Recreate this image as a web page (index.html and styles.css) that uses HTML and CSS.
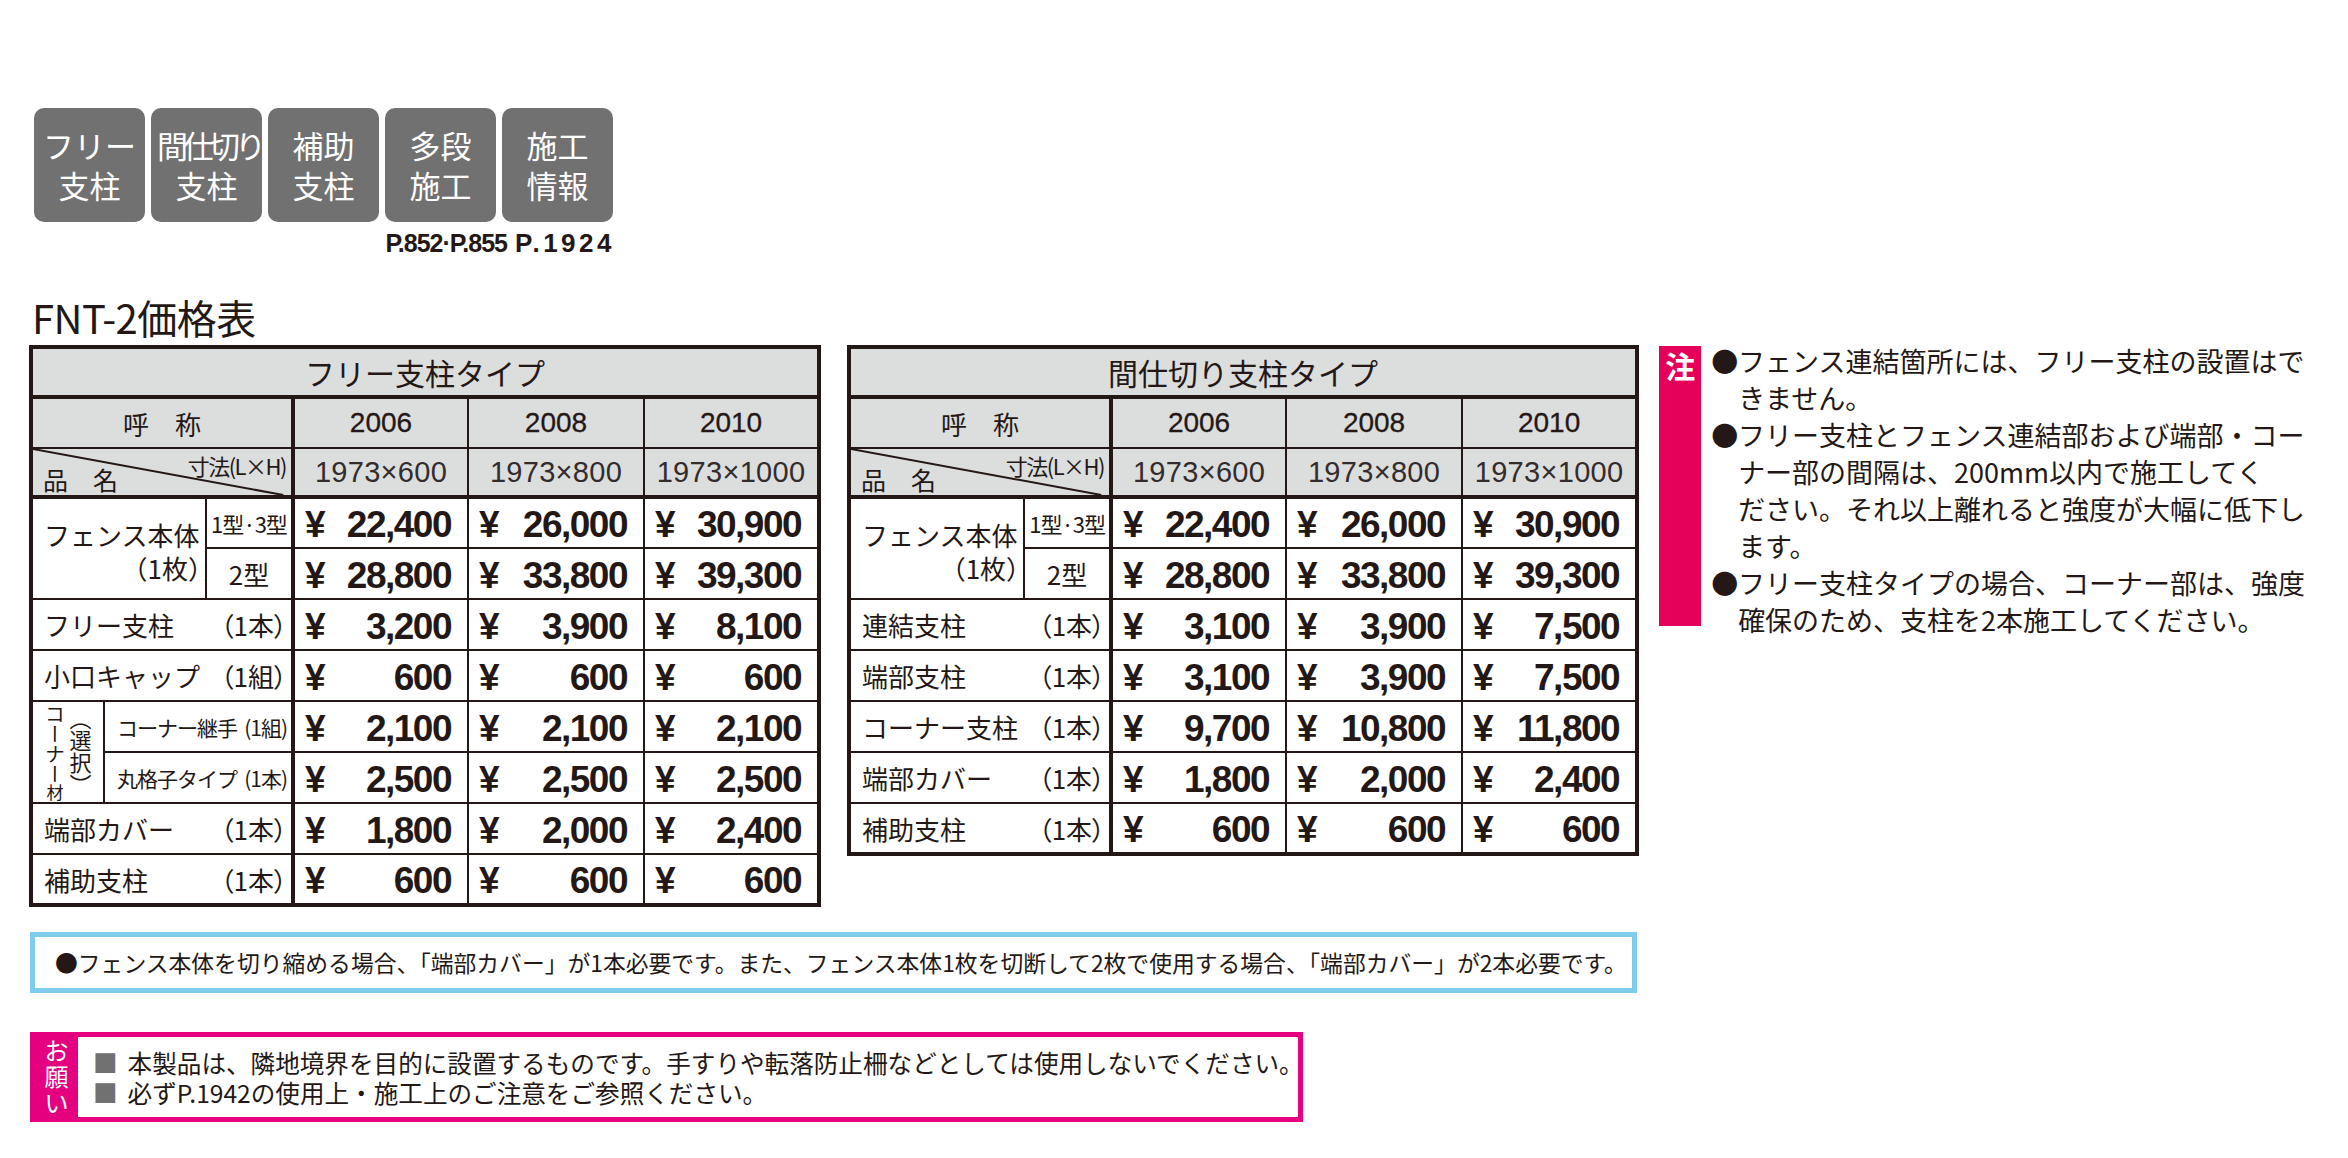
FILE: index.html
```html
<!DOCTYPE html>
<html lang="ja">
<head>
<meta charset="utf-8">
<title>FNT-2価格表</title>
<link rel="stylesheet" href="styles.css">
</head>
<body>
<div class="page">
  <div class="badges">
    <div class="badge-row">
      <div class="badge"><span>フリー</span><span>支柱</span></div>
      <div class="badge"><span class="tight">間仕切り</span><span>支柱</span></div>
      <div class="badge"><span>補助</span><span>支柱</span></div>
      <div class="badge"><span>多段</span><span>施工</span></div>
      <div class="badge"><span>施工</span><span>情報</span></div>
    </div>
    <div class="refs"><span class="ref-a">P.852·P.855</span><span class="ref-b">P.1924</span></div>
  </div>

  <h1 class="title">FNT-2価格表</h1>

  <div class="tables">
    <table class="price">
      <colgroup><col class="c-a"><col class="c-b"><col class="c-c"><col class="c-p c-first"><col class="c-p2"><col class="c-p"></colgroup>
      <thead>
        <tr class="r-title"><th colspan="6" class="t-title">フリー支柱タイプ</th></tr>
        <tr class="r-head"><th colspan="3" class="h-name">呼　称</th><th class="h-year">2006</th><th class="h-year">2008</th><th class="h-year">2010</th></tr>
        <tr class="r-dim">
          <th colspan="3" class="h-diag">
            <svg class="diag" viewBox="0 0 100 100" preserveAspectRatio="none"><line x1="0" y1="0" x2="97" y2="100"/></svg>
            <span class="diag-top">寸法(L×H)</span><span class="diag-bottom">品　名</span>
          </th>
          <th class="h-dim">1973×600</th><th class="h-dim">1973×800</th><th class="h-dim">1973×1000</th>
        </tr>
      </thead>
      <tbody>
        <tr class="r-data">
          <td colspan="2" rowspan="2" class="n-main"><div class="nm-1">フェンス本体</div><div class="nm-2">（1枚）</div></td>
          <td class="n-sub n-sub-s">1型·3型</td>
          <td><div class="pc"><span>¥</span><span>22,400</span></div></td>
          <td><div class="pc"><span>¥</span><span>26,000</span></div></td>
          <td><div class="pc"><span>¥</span><span>30,900</span></div></td>
        </tr>
        <tr class="r-data">
          <td class="n-sub">2型</td>
          <td><div class="pc"><span>¥</span><span>28,800</span></div></td>
          <td><div class="pc"><span>¥</span><span>33,800</span></div></td>
          <td><div class="pc"><span>¥</span><span>39,300</span></div></td>
        </tr>
        <tr class="r-data">
          <td colspan="3"><div class="nr"><span>フリー支柱</span><span class="cnt">（1本）</span></div></td>
          <td><div class="pc"><span>¥</span><span>3,200</span></div></td>
          <td><div class="pc"><span>¥</span><span>3,900</span></div></td>
          <td><div class="pc"><span>¥</span><span>8,100</span></div></td>
        </tr>
        <tr class="r-data">
          <td colspan="3"><div class="nr"><span>小口キャップ</span><span class="cnt">（1組）</span></div></td>
          <td><div class="pc"><span>¥</span><span>600</span></div></td>
          <td><div class="pc"><span>¥</span><span>600</span></div></td>
          <td><div class="pc"><span>¥</span><span>600</span></div></td>
        </tr>
        <tr class="r-data">
          <td rowspan="2" class="n-corner"><div class="corner"><span class="v-main">コーナー<span class="v-small">材</span></span><span class="v-sub">（選択）</span></div></td>
          <td colspan="2"><div class="nr nr-s"><span>コーナー継手</span><span class="cnt">(1組)</span></div></td>
          <td><div class="pc"><span>¥</span><span>2,100</span></div></td>
          <td><div class="pc"><span>¥</span><span>2,100</span></div></td>
          <td><div class="pc"><span>¥</span><span>2,100</span></div></td>
        </tr>
        <tr class="r-data">
          <td colspan="2"><div class="nr nr-s"><span>丸格子タイプ</span><span class="cnt">(1本)</span></div></td>
          <td><div class="pc"><span>¥</span><span>2,500</span></div></td>
          <td><div class="pc"><span>¥</span><span>2,500</span></div></td>
          <td><div class="pc"><span>¥</span><span>2,500</span></div></td>
        </tr>
        <tr class="r-data">
          <td colspan="3"><div class="nr"><span>端部カバー</span><span class="cnt">（1本）</span></div></td>
          <td><div class="pc"><span>¥</span><span>1,800</span></div></td>
          <td><div class="pc"><span>¥</span><span>2,000</span></div></td>
          <td><div class="pc"><span>¥</span><span>2,400</span></div></td>
        </tr>
        <tr class="r-data">
          <td colspan="3"><div class="nr"><span>補助支柱</span><span class="cnt">（1本）</span></div></td>
          <td><div class="pc"><span>¥</span><span>600</span></div></td>
          <td><div class="pc"><span>¥</span><span>600</span></div></td>
          <td><div class="pc"><span>¥</span><span>600</span></div></td>
        </tr>
      </tbody>
    </table>

    <table class="price">
      <colgroup><col class="c-a"><col class="c-b"><col class="c-c"><col class="c-p c-first"><col class="c-p2"><col class="c-p"></colgroup>
      <thead>
        <tr class="r-title"><th colspan="6" class="t-title">間仕切り支柱タイプ</th></tr>
        <tr class="r-head"><th colspan="3" class="h-name">呼　称</th><th class="h-year">2006</th><th class="h-year">2008</th><th class="h-year">2010</th></tr>
        <tr class="r-dim">
          <th colspan="3" class="h-diag">
            <svg class="diag" viewBox="0 0 100 100" preserveAspectRatio="none"><line x1="0" y1="0" x2="97" y2="100"/></svg>
            <span class="diag-top">寸法(L×H)</span><span class="diag-bottom">品　名</span>
          </th>
          <th class="h-dim">1973×600</th><th class="h-dim">1973×800</th><th class="h-dim">1973×1000</th>
        </tr>
      </thead>
      <tbody>
        <tr class="r-data">
          <td colspan="2" rowspan="2" class="n-main"><div class="nm-1">フェンス本体</div><div class="nm-2">（1枚）</div></td>
          <td class="n-sub n-sub-s">1型·3型</td>
          <td><div class="pc"><span>¥</span><span>22,400</span></div></td>
          <td><div class="pc"><span>¥</span><span>26,000</span></div></td>
          <td><div class="pc"><span>¥</span><span>30,900</span></div></td>
        </tr>
        <tr class="r-data">
          <td class="n-sub">2型</td>
          <td><div class="pc"><span>¥</span><span>28,800</span></div></td>
          <td><div class="pc"><span>¥</span><span>33,800</span></div></td>
          <td><div class="pc"><span>¥</span><span>39,300</span></div></td>
        </tr>
        <tr class="r-data">
          <td colspan="3"><div class="nr"><span>連結支柱</span><span class="cnt">（1本）</span></div></td>
          <td><div class="pc"><span>¥</span><span>3,100</span></div></td>
          <td><div class="pc"><span>¥</span><span>3,900</span></div></td>
          <td><div class="pc"><span>¥</span><span>7,500</span></div></td>
        </tr>
        <tr class="r-data">
          <td colspan="3"><div class="nr"><span>端部支柱</span><span class="cnt">（1本）</span></div></td>
          <td><div class="pc"><span>¥</span><span>3,100</span></div></td>
          <td><div class="pc"><span>¥</span><span>3,900</span></div></td>
          <td><div class="pc"><span>¥</span><span>7,500</span></div></td>
        </tr>
        <tr class="r-data">
          <td colspan="3"><div class="nr"><span>コーナー支柱</span><span class="cnt">（1本）</span></div></td>
          <td><div class="pc"><span>¥</span><span>9,700</span></div></td>
          <td><div class="pc"><span>¥</span><span>10,800</span></div></td>
          <td><div class="pc"><span>¥</span><span>11,800</span></div></td>
        </tr>
        <tr class="r-data">
          <td colspan="3"><div class="nr"><span>端部カバー</span><span class="cnt">（1本）</span></div></td>
          <td><div class="pc"><span>¥</span><span>1,800</span></div></td>
          <td><div class="pc"><span>¥</span><span>2,000</span></div></td>
          <td><div class="pc"><span>¥</span><span>2,400</span></div></td>
        </tr>
        <tr class="r-data">
          <td colspan="3"><div class="nr"><span>補助支柱</span><span class="cnt">（1本）</span></div></td>
          <td><div class="pc"><span>¥</span><span>600</span></div></td>
          <td><div class="pc"><span>¥</span><span>600</span></div></td>
          <td><div class="pc"><span>¥</span><span>600</span></div></td>
        </tr>
      </tbody>
    </table>

    <div class="note">
      <div class="note-tag">注</div>
      <div class="note-body">
        <span class="ln">●フェンス連結箇所には、フリー支柱の設置はで</span>
        <span class="ln cont">きません。</span>
        <span class="ln">●フリー支柱とフェンス連結部および端部・コー</span>
        <span class="ln cont">ナー部の間隔は、200mm以内で施工してく</span>
        <span class="ln cont">ださい。それ以上離れると強度が大幅に低下し</span>
        <span class="ln cont">ます。</span>
        <span class="ln">●フリー支柱タイプの場合、コーナー部は、強度</span>
        <span class="ln cont">確保のため、支柱を2本施工してください。</span>
      </div>
    </div>
  </div>

  <div class="info">●フェンス本体を切り縮める場合、「端部カバー」が1本必要です。また、フェンス本体1枚を切断して2枚で使用する場合、「端部カバー」が2本必要です。</div>

  <div class="request">
    <div class="request-tag"><span>お</span><span>願</span><span>い</span></div>
    <div class="request-body">
      <p class="req-line"><span class="sq">■</span>本製品は、隣地境界を目的に設置するものです。手すりや転落防止柵などとしては使用しないでください。</p>
      <p class="req-line"><span class="sq">■</span>必ずP.1942の使用上・施工上のご注意をご参照ください。</p>
    </div>
  </div>
</div>
</body>
</html>
```

FILE: styles.css
```css
* { box-sizing: border-box; }

body {
  margin: 0;
  background: #ffffff;
  color: #231815;
  font-family: "Noto Sans CJK JP", "Noto Sans", sans-serif;
}

.page {
  padding: 108px 0 0 29px;
}

/* ---------- badges ---------- */
.badges {
  margin-left: 5px;
  width: 579px;
}

.badge-row {
  display: flex;
  gap: 6px;
}

.badge {
  width: 111px;
  height: 114px;
  border-radius: 10px;
  background: #727171;
  color: #ffffff;
  display: flex;
  flex-direction: column;
  align-items: center;
  justify-content: center;
  font-size: 31px;
  line-height: 40px;
  white-space: nowrap;
}

.badge .tight {
  letter-spacing: -5px;
  margin-right: -5px;
}

.refs {
  display: flex;
  justify-content: flex-end;
  align-items: baseline;
  gap: 8px;
  margin-top: 8px;
  font-family: "Liberation Sans", sans-serif;
  font-weight: bold;
  line-height: 26px;
}

.ref-a {
  font-size: 25px;
  letter-spacing: -1px;
}

.ref-b {
  font-size: 26px;
  letter-spacing: 3.5px;
  margin-right: -2px;
}

/* ---------- title ---------- */
.title {
  margin: 38px 0 5px 3px;
  font-size: 40px;
  line-height: 46px;
  font-weight: normal;
  letter-spacing: -0.5px;
}

/* ---------- tables ---------- */
.tables {
  display: flex;
  align-items: flex-start;
  gap: 26px;
}

.price {
  border-collapse: collapse;
  table-layout: fixed;
  width: 792px;
  border: 4px solid #231815;
  flex: none;
}

.price col.c-a { width: 73px; }
.price col.c-b { width: 102px; }
.price col.c-c { width: 87px; }
.price col.c-p { width: 175px; }
.price col.c-p2 { width: 176px; }
.price col.c-first { border-left: 4px solid #231815; }

.price th,
.price td {
  border: 2px solid #231815;
  padding: 0;
  font-weight: normal;
}

.price thead th {
  background: #dcdddd;
}

.price tbody td {
  background: #ffffff;
}

.r-title { border-bottom: 4px solid #231815; }
.r-dim { border-bottom: 4px solid #231815; }

.r-title th { height: 50px; }
.r-head th { height: 51px; }
.r-dim th { height: 49px; }
.r-data td { height: 51px; }

.t-title {
  font-size: 30px;
  line-height: 40px;
  text-align: center;
}

.h-name {
  font-size: 26px;
  text-align: center;
}

.h-year {
  font-family: "Liberation Sans", sans-serif;
  font-size: 28px;
  -webkit-text-stroke: 0.3px #231815;
  text-align: center;
}

.h-dim {
  font-family: "Liberation Sans", sans-serif;
  font-size: 29px;
  letter-spacing: 0.3px;
  text-align: center;
  color: #332c2c;
}

.h-diag {
  position: relative;
}

.diag {
  position: absolute;
  left: 0;
  top: 0;
  width: 100%;
  height: 100%;
}

.diag line {
  stroke: #231815;
  stroke-width: 2;
  vector-effect: non-scaling-stroke;
}

.diag-top {
  position: absolute;
  right: 5px;
  top: 3px;
  font-size: 22px;
  line-height: 26px;
  letter-spacing: -1.5px;
}

.diag-bottom {
  position: absolute;
  left: 10px;
  bottom: 1px;
  font-size: 25px;
  line-height: 30px;
}

/* name cells */
.n-main {
  font-size: 26px;
  line-height: 33px;
  padding: 4px 0 0 11px !important;
}

.nm-2 {
  text-align: right;
  margin-right: -9px;
}

.cnt {
  font-feature-settings: "palt";
}

.n-sub {
  font-size: 26px;
  text-align: center;
}

.n-sub-s {
  font-size: 22px;
  letter-spacing: -1px;
  white-space: nowrap;
}

.nr {
  display: flex;
  justify-content: space-between;
  align-items: center;
  padding: 0 4px 0 11px;
  font-size: 26px;
  white-space: nowrap;
}

.nr-s {
  font-size: 21px;
  letter-spacing: -1px;
  padding-left: 12px;
}

.n-corner {
  padding: 0 !important;
}

.corner {
  display: flex;
  justify-content: center;
  align-items: center;
  gap: 3px;
}

.v-main {
  writing-mode: vertical-rl;
  font-size: 20px;
  line-height: 22px;
}

.v-small {
  font-size: 17px;
}

.v-sub {
  writing-mode: vertical-rl;
  font-size: 22px;
  line-height: 24px;
}

/* price cells */
.pc {
  display: flex;
  justify-content: space-between;
  align-items: center;
  padding: 4px 16px 0 10px;
  font-family: "Liberation Sans", sans-serif;
  font-weight: bold;
  font-size: 37px;
  line-height: 44px;
  letter-spacing: -1.5px;
}

/* ---------- note ---------- */
.note {
  display: flex;
  align-items: flex-start;
  margin-left: -6px;
  margin-top: 1px;
}

.note-tag {
  width: 42px;
  height: 280px;
  flex: none;
  background: #e5005a;
  color: #ffffff;
  font-size: 30px;
  font-weight: bold;
  line-height: 34px;
  text-align: center;
  padding-top: 2px;
}

.note-body {
  margin-left: 10px;
  margin-top: -4px;
  font-size: 27px;
  line-height: 37px;
}

.ln {
  display: block;
  white-space: nowrap;
}

.ln.cont {
  padding-left: 27px;
}

/* ---------- info box ---------- */
.info {
  margin: 25px 0 0 1px;
  width: 1607px;
  height: 61px;
  border: 5px solid #80ccef;
  padding: 10px 20px;
  font-size: 22.8px;
  line-height: 31px;
  white-space: nowrap;
}

/* ---------- request box ---------- */
.request {
  margin: 39px 0 0 1px;
  width: 1273px;
  height: 90px;
  border: 5px solid #e4007f;
  display: flex;
}

.request-tag {
  width: 43px;
  flex: none;
  background: #e4007f;
  color: #ffffff;
  display: flex;
  flex-direction: column;
  align-items: center;
  justify-content: center;
  font-size: 24px;
  line-height: 26px;
  padding-bottom: 2px;
}

.request-body {
  padding: 10px 0 0 15px;
}

.req-line {
  margin: 0;
  font-size: 24.6px;
  line-height: 30px;
  white-space: nowrap;
}

.sq {
  color: #727171;
  margin-right: 10px;
}
```
